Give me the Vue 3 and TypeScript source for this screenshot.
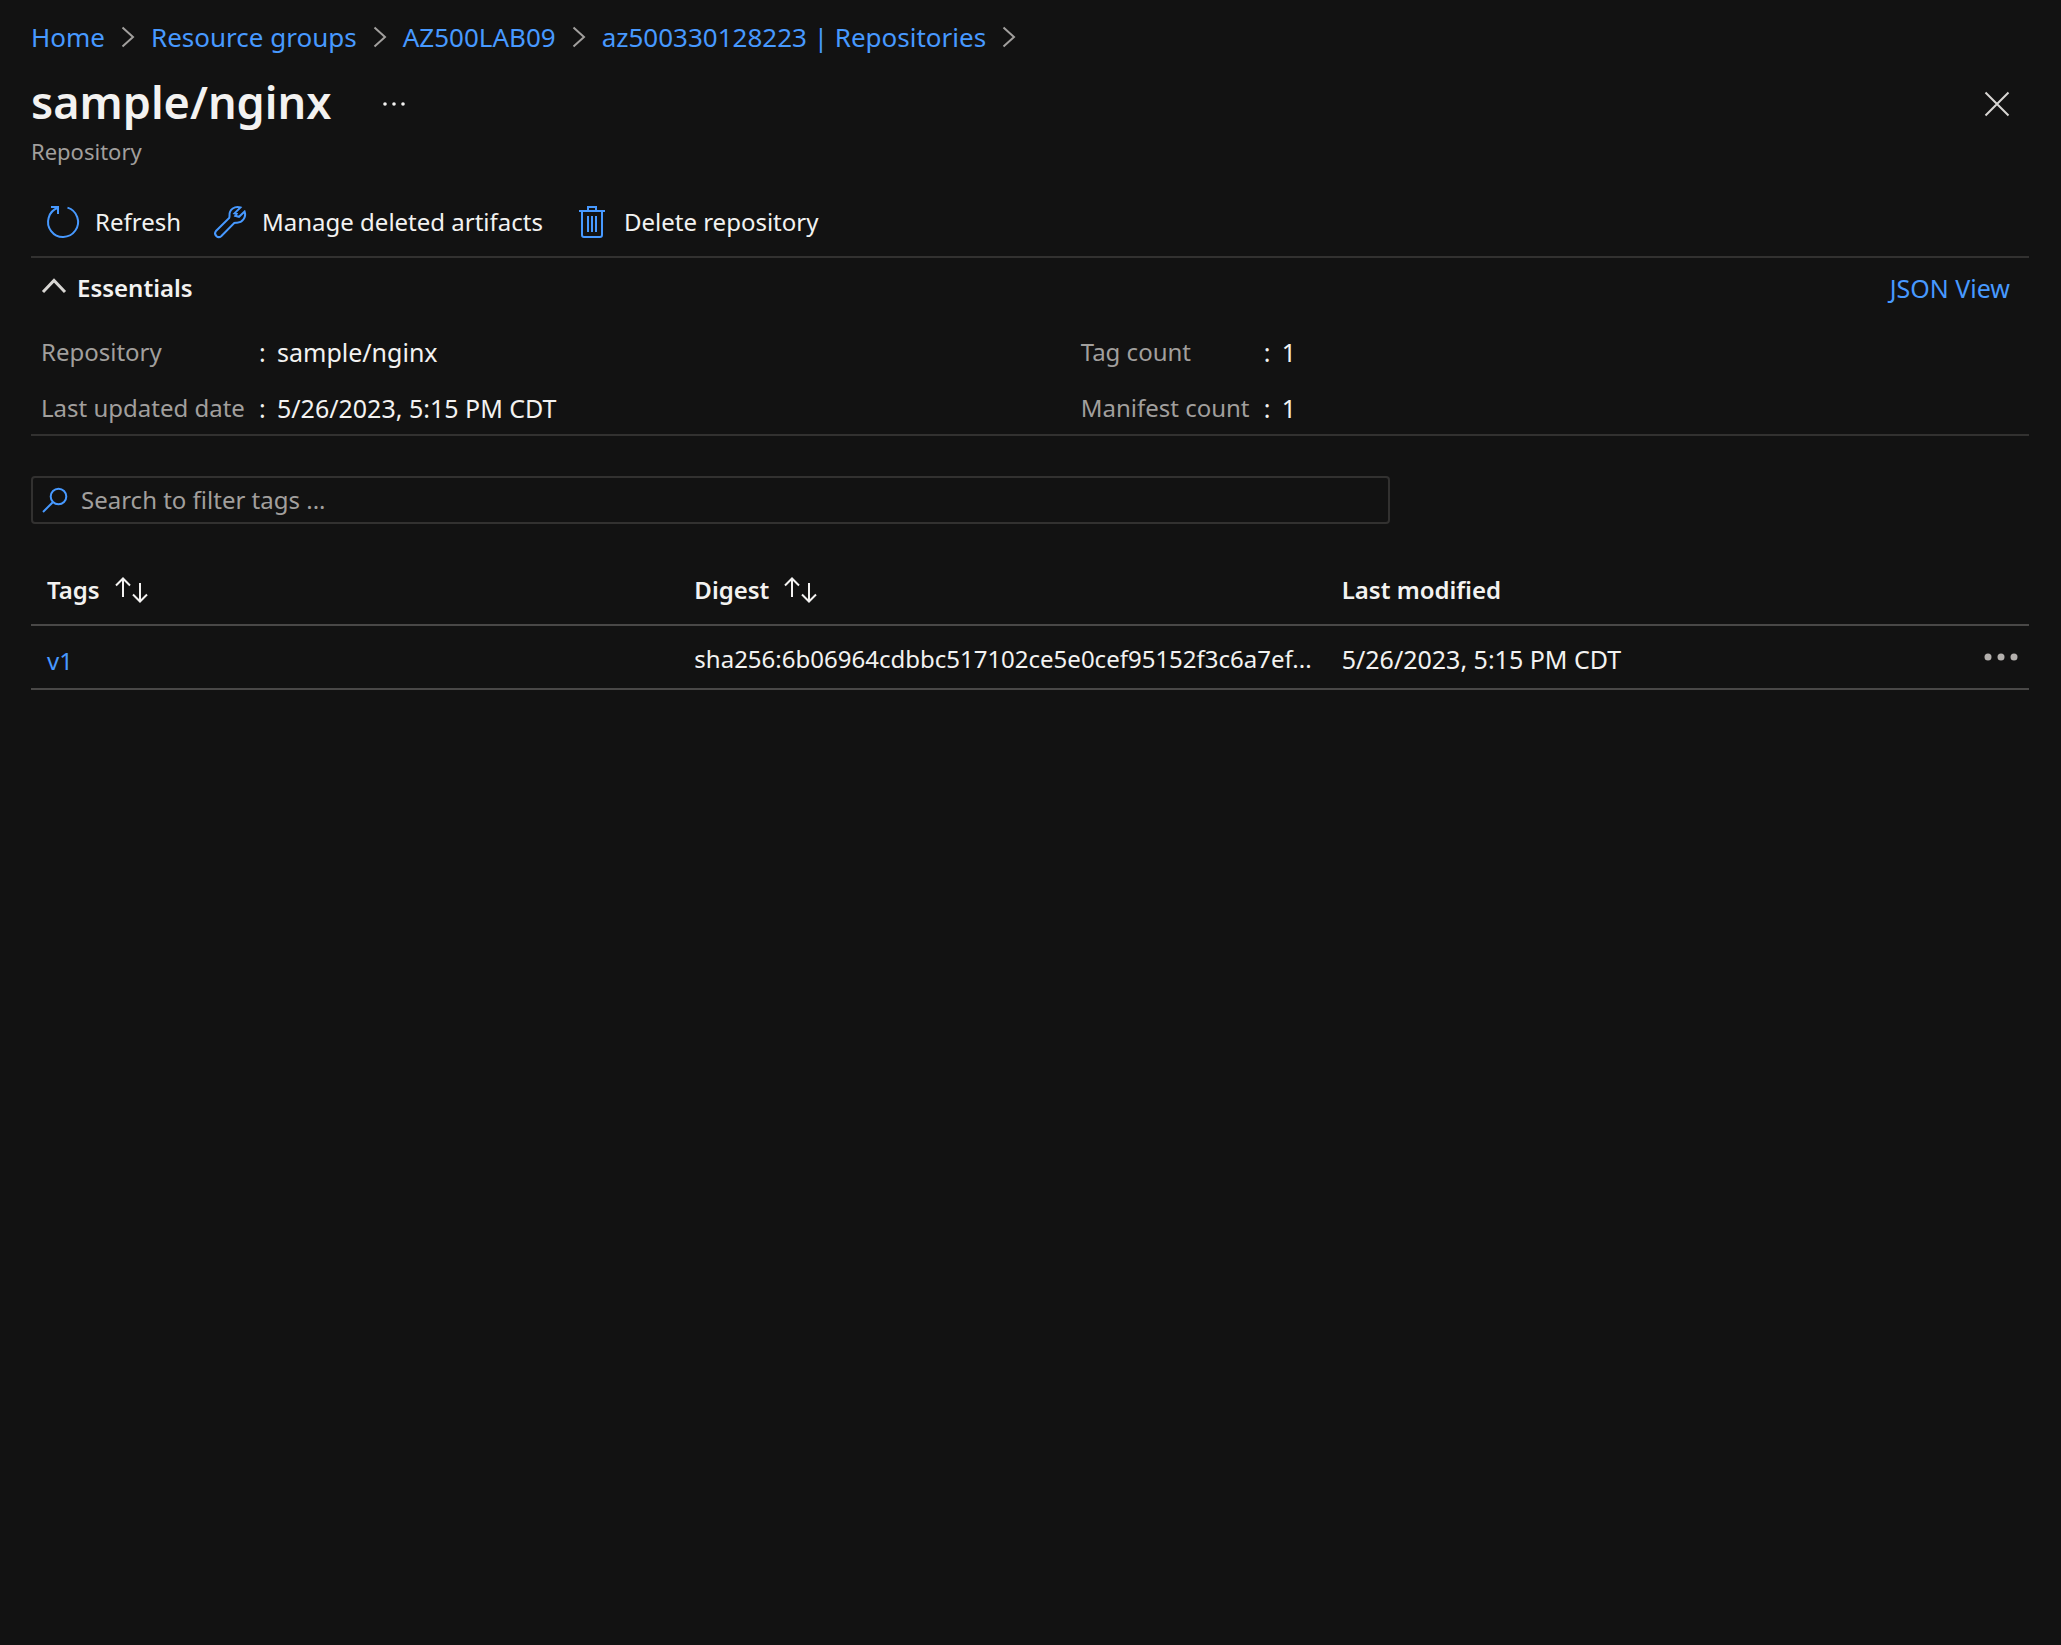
<script setup lang="ts">
import { ref } from 'vue'

interface Detail {
  label: string
  value: string
}

interface TagRow {
  tag: string
  digest: string
  modified: string
}

const crumbs: string[] = ['Home', 'Resource groups', 'AZ500LAB09', 'az500330128223 | Repositories']

const leftDetails: Detail[] = [
  { label: 'Repository', value: 'sample/nginx' },
  { label: 'Last updated date', value: '5/26/2023, 5:15 PM CDT' },
]

const rightDetails: Detail[] = [
  { label: 'Tag count', value: '1' },
  { label: 'Manifest count', value: '1' },
]

const rows: TagRow[] = [
  {
    tag: 'v1',
    digest: 'sha256:6b06964cdbbc517102ce5e0cef95152f3c6a7ef...',
    modified: '5/26/2023, 5:15 PM CDT',
  },
]

const filter = ref('')
</script>

<template>
  <div class="page">
    <nav class="crumbs" aria-label="Breadcrumb">
      <template v-for="crumb in crumbs" :key="crumb">
        <a href="#">{{ crumb }}</a>
        <svg class="crumb-sep" viewBox="0 0 14 22" aria-hidden="true">
          <path d="M1.5 1.5 L12 11 L1.5 20.5" />
        </svg>
      </template>
    </nav>

    <header class="title-bar">
      <h1>sample/nginx</h1>
      <button class="more" type="button" aria-label="More actions">
        <svg width="24" height="6" viewBox="0 0 24 6">
          <circle cx="3" cy="3" r="1.8" /><circle cx="12" cy="3" r="1.8" /><circle cx="21" cy="3" r="1.8" />
        </svg>
      </button>
      <button class="close" type="button" aria-label="Close">
        <svg width="26" height="26" viewBox="0 0 26 26"><path d="M1.5 1.5 L24.5 24.5 M24.5 1.5 L1.5 24.5" /></svg>
      </button>
    </header>
    <p class="subtitle">Repository</p>

    <div class="toolbar" role="toolbar" aria-label="Repository commands">
      <button type="button">
        <svg width="32" height="32" viewBox="0 0 32 32" aria-hidden="true">
          <path d="M20.5 1.6 A15 15 0 1 1 11 1.8" />
          <path d="M4 1 H11 V8" />
        </svg>
        <span>Refresh</span>
      </button>
      <button type="button">
        <svg width="32" height="32" viewBox="0 0 32 32" aria-hidden="true">
          <path d="M26.5 1.5 C21 -0.5 15 3.5 15.5 9.5 Q15.6 11 15.2 11.9 L2 25 A3.7 3.7 0 0 0 7.2 30.2 L20.2 17 Q21 16.6 22.5 16.7 C28.5 17 32.5 11 30.6 5.5 L25 10.8 L21.3 9.8 L22.6 7.9 L20.5 7.4 Z" />
        </svg>
        <span>Manage deleted artifacts</span>
      </button>
      <button type="button">
        <svg width="32" height="32" viewBox="0 0 32 32" aria-hidden="true">
          <path d="M3 5 H29 M12 5 V1 H20 V5 M6 5 V29 Q6 31 8 31 H24 Q26 31 26 29 V5 M12 10 V26 M16 10 V26 M20 10 V26" />
        </svg>
        <span>Delete repository</span>
      </button>
    </div>

    <section class="essentials">
      <div class="essentials-head">
        <button type="button" class="toggle" aria-expanded="true">
          <svg width="26" height="20" viewBox="0 0 26 20" aria-hidden="true"><path d="M2 14 L13 2.5 L24 14" /></svg>
          <span>Essentials</span>
        </button>
        <a href="#">JSON View</a>
      </div>
      <div class="details">
        <dl class="left">
          <div v-for="d in leftDetails" :key="d.label">
            <dt>{{ d.label }}</dt>
            <dd><span class="colon">:</span>{{ d.value }}</dd>
          </div>
        </dl>
        <dl class="right">
          <div v-for="d in rightDetails" :key="d.label">
            <dt>{{ d.label }}</dt>
            <dd><span class="colon">:</span>{{ d.value }}</dd>
          </div>
        </dl>
      </div>
    </section>

    <label class="search">
      <svg width="26" height="26" viewBox="0 0 26 26" aria-hidden="true">
        <circle cx="16.5" cy="9.5" r="7.8" /><path d="M10.8 15.2 L1 25" />
      </svg>
      <input v-model="filter" type="text" placeholder="Search to filter tags ..." aria-label="Search to filter tags" />
    </label>

    <table>
      <colgroup>
        <col class="col-tag" />
        <col class="col-digest" />
        <col />
        <col class="col-menu" />
      </colgroup>
      <thead>
        <tr>
          <th v-for="name in ['Tags', 'Digest']" :key="name" scope="col">
            <button type="button" class="sort">
              <span>{{ name }}</span>
              <svg width="33" height="26" viewBox="0 0 33 26" aria-hidden="true">
                <path d="M8 20 V1.5 M1 8.5 L8 1.5 L15 8.5 M25 6 V24.5 M18 17.5 L25 24.5 L32 17.5" />
              </svg>
            </button>
          </th>
          <th scope="col">Last modified</th>
          <td></td>
        </tr>
      </thead>
      <tbody>
        <tr v-for="row in rows" :key="row.tag">
          <td><a href="#" class="tag">{{ row.tag }}</a></td>
          <td>{{ row.digest }}</td>
          <td class="date">{{ row.modified }}</td>
          <td class="menu">
            <button type="button" aria-label="Row actions">
              <svg width="34" height="8" viewBox="0 0 34 8">
                <circle cx="4" cy="4" r="3.5" /><circle cx="17" cy="4" r="3.5" /><circle cx="30" cy="4" r="3.5" />
              </svg>
            </button>
          </td>
        </tr>
      </tbody>
    </table>
  </div>
</template>

<style>
html,
body {
  margin: 0;
  background: #121212;
}
</style>

<style scoped>
.page {
  padding: 17px 32px 0 31px;
  color: #f3f2f1;
  font-family: 'Noto Sans', 'Open Sans', sans-serif;
  font-size: 24px;
  line-height: 40px;
}

a {
  color: #4799ff;
  text-decoration: none;
}

button {
  display: flex;
  align-items: center;
  margin: 0;
  padding: 0;
  border: 0;
  background: none;
  color: inherit;
  font: inherit;
  cursor: pointer;
}

svg {
  display: block;
  flex: none;
  overflow: visible;
  fill: none;
}

.crumbs {
  display: flex;
  align-items: center;
  gap: 16px;
  font-size: 26px;
}

.crumb-sep {
  width: 14px;
  height: 22px;
  stroke: #a19f9d;
  stroke-width: 2;
}

.title-bar {
  display: flex;
  align-items: center;
  margin-top: 13px;
}

h1 {
  margin: 0;
  font-size: 45px;
  font-weight: 600;
  line-height: 64px;
}

.more,
.close {
  padding-top: 4px;
}

.more {
  margin-left: 51px;
  fill: #f3f2f1;
}

.more svg,
.menu svg {
  fill: inherit;
}

.close {
  margin-left: auto;
  margin-right: 19px;
  stroke: #d8d6d3;
  stroke-width: 2;
}

.subtitle {
  margin: 1px 0 0;
  color: #a19f9d;
  font-size: 22px;
  line-height: 32px;
}

.toolbar {
  display: flex;
  margin-top: 35px;
  padding: 0 16px 14px;
  border-bottom: 2px solid #323130;
  gap: 33px;
}

.toolbar button {
  gap: 16px;
}

.toolbar svg {
  stroke: #4799ff;
  stroke-width: 2;
}

.essentials {
  padding: 10px 0 6px 10px;
  border-bottom: 2px solid #323130;
}

.essentials-head {
  display: flex;
  justify-content: space-between;
  padding-right: 19px;
}

.essentials-head a {
  font-size: 25px;
}

.toggle {
  gap: 10px;
  font-weight: 600;
}

.toggle svg {
  stroke: #d8d6d3;
  stroke-width: 3;
}

.details {
  display: flex;
  margin-top: 24px;
}

.details dl {
  display: flex;
  flex-direction: column;
  gap: 16px;
  margin: 0;
}

.details dl > div {
  display: flex;
}

.left {
  width: 52.3%;
}

.left dt {
  width: 218px;
}

.right dt {
  width: 183px;
}

dt {
  color: #a19f9d;
}

dd {
  display: flex;
  margin: 0;
  font-size: 25px;
}

.colon {
  width: 18px;
}

.search {
  display: flex;
  align-items: center;
  box-sizing: border-box;
  width: 68%;
  height: 48px;
  margin-top: 40px;
  padding: 0 9px;
  border: 2px solid #323130;
  border-radius: 4px;
  gap: 13px;
}

.search svg {
  stroke: #4799ff;
  stroke-width: 2;
}

.search input {
  flex: 1;
  min-width: 0;
  padding: 0;
  border: 0;
  outline: 0;
  background: none;
  color: inherit;
  font: inherit;
}

.search input::placeholder {
  color: #a19f9d;
  opacity: 1;
}

table {
  width: 100%;
  margin-top: 46px;
  border-collapse: separate;
  border-spacing: 0;
  table-layout: fixed;
}

.col-tag,
.col-digest {
  width: 32.4%;
}

.col-menu {
  width: 64px;
}

th,
td {
  padding: 0 0 14px 16px;
  border-bottom: 2px solid #494847;
  font-weight: 400;
  text-align: left;
  vertical-align: top;
  white-space: nowrap;
}

th {
  font-weight: 600;
}

.sort {
  gap: 15px;
}

.sort svg {
  stroke: #f3f2f1;
  stroke-width: 2;
}

tbody td {
  height: 40px;
  padding: 13px 0 9px 16px;
}

.date {
  font-size: 25px;
}

.tag {
  display: block;
  height: 40px;
  line-height: 44px;
}

tbody .menu {
  padding-left: 19px;
}

.menu button {
  height: 36px;
  fill: #b3b0ad;
}
</style>
